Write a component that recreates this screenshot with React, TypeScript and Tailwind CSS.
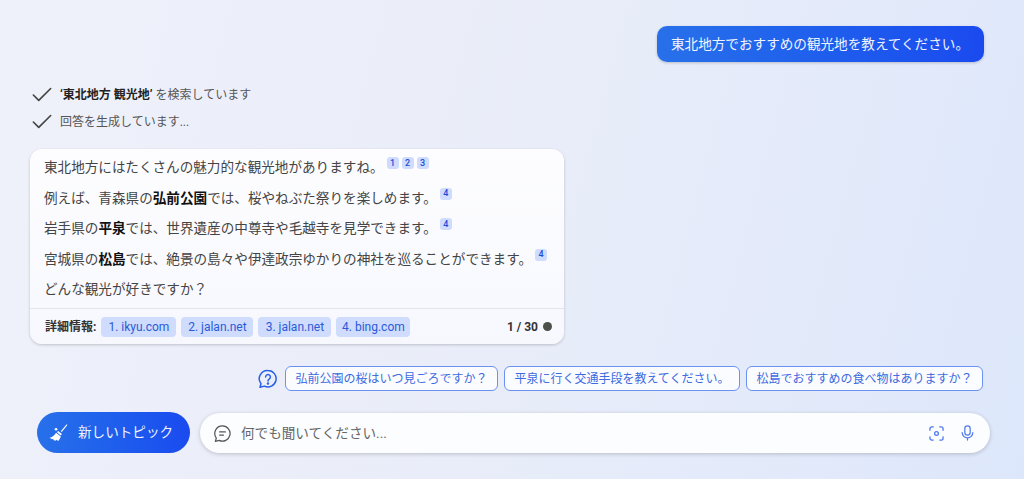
import { Check } from "lucide-react";

function Cite({ nums }: { nums: number[] }) {
  return (
    <span className="relative -top-[5px] ml-[3px] inline-flex gap-[3px] align-middle">
      {nums.map((n) => (
        <span
          key={n}
          className="flex h-[12px] w-[12px] items-center justify-center rounded-[3px] bg-[#cfdcfd] text-[9px] font-medium leading-none text-[#1d4ed8]"
        >
          {n}
        </span>
      ))}
    </span>
  );
}

function Step({ children }: { children: React.ReactNode }) {
  return (
    <div className="flex h-[27px] items-center">
      <Check className="-ml-[1px] h-[26px] w-[26px] text-[#444]" strokeWidth={1.5} />
      <span className="ml-[5px] text-[12px] text-[#555]">{children}</span>
    </div>
  );
}

const sources = [
  { label: "1. ikyu.com", width: "w-[75px]" },
  { label: "2. jalan.net", width: "w-[72px]" },
  { label: "3. jalan.net", width: "w-[73px]" },
  { label: "4. bing.com", width: "w-[74px]" },
];
const suggestions = [
  "弘前公園の桜はいつ見ごろですか？",
  "平泉に行く交通手段を教えてください。",
  "松島でおすすめの食べ物はありますか？",
];

export default function App() {
  return (
    <div className="flex h-[479px] w-[1024px] flex-col overflow-hidden bg-[linear-gradient(105deg,#eff1fa_0%,#e9edf9_50%,#dde7fb_100%)] pl-[30px] pr-[40px] pt-[26px] font-['Roboto','Noto_Sans_CJK_JP',sans-serif] text-[#333]">
      <div className="flex justify-end">
        <div className="flex h-[36px] w-[327px] items-center rounded-[10px] bg-gradient-to-r from-[#2870ea] to-[#1b4aef] pl-[14px] text-[13.6px] text-[#f0f4ff] shadow-[0_1px_3px_rgba(0,0,0,0.2)]">
          東北地方でおすすめの観光地を教えてください。
        </div>
      </div>

      <div className="mt-[19px] flex flex-col">
        <Step>
          <b className="font-bold text-[#222]">‘東北地方 観光地’</b> を検索しています
        </Step>
        <Step>回答を生成しています...</Step>
      </div>

      <div className="mt-[14px] w-[534px] rounded-[12px] bg-gradient-to-b from-[#fdfdff] to-[#f7f8fe] shadow-[0_1px_3px_rgba(0,0,0,0.2)]">
        <div className="flex flex-col gap-[10.5px] px-[14px] pt-[8px] pb-[9px] text-[13.6px] leading-[20px] text-[#444]">
          <p>
            東北地方にはたくさんの魅力的な観光地がありますね。
            <Cite nums={[1, 2, 3]} />
          </p>
          <p>
            例えば、青森県の<b className="text-[#111]">弘前公園</b>では、桜やねぶた祭りを楽しめます。
            <Cite nums={[4]} />
          </p>
          <p>
            岩手県の<b className="text-[#111]">平泉</b>では、世界遺産の中尊寺や毛越寺を見学できます。
            <Cite nums={[4]} />
          </p>
          <p>
            宮城県の<b className="text-[#111]">松島</b>では、絶景の島々や伊達政宗ゆかりの神社を巡ることができます。
            <Cite nums={[4]} />
          </p>
          <p>どんな観光が好きですか？</p>
        </div>
        <div className="flex h-[36px] items-center border-t border-[#e3e5ea] pl-[15px] pr-[12px]">
          <span className="mr-[5px] text-[12px] font-bold text-[#333]">詳細情報:</span>
          <div className="flex gap-[5px]">
            {sources.map((s) => (
              <span
                key={s.label}
                className={`flex h-[20px] items-center justify-center rounded-[4px] bg-[#cfdcfd] text-[12px] text-[#2a5bd7] ${s.width}`}
              >
                {s.label}
              </span>
            ))}
          </div>
          <span className="ml-auto text-[12px] font-bold text-[#333]">1 / 30</span>
          <span className="ml-[5px] h-[9px] w-[9px] rounded-full bg-[#4a4f4a]" />
        </div>
      </div>

      <div className="mr-[1px] mt-[22px] flex items-center justify-end gap-[6px]">
        <svg viewBox="0 0 20 20" className="mr-[1px] h-[20px] w-[20px] fill-none stroke-[#2a60e4]" strokeWidth="1.5">
          <path d="M10 1.5a8.2 8.2 0 1 1-3.6 15.6L2 18.3l1-3.6A8.2 8.2 0 0 1 10 1.5Z" strokeLinejoin="round" />
          <path d="M7.6 8a2.4 2.4 0 1 1 3.6 2.1c-.8.5-1.2 1-1.2 1.9" strokeLinecap="round" />
          <circle cx="10" cy="14.4" r=".5" fill="#2a60e4" />
        </svg>
        {suggestions.map((s) => (
          <button
            key={s}
            className="flex h-[25px] items-center rounded-[6px] border border-[#6a92f2] bg-[#fbfcff] px-[9.5px] text-[12px] text-[#3d6be0]"
          >
            {s}
          </button>
        ))}
      </div>

      <div className="-mr-[6px] mt-[21px] flex gap-[10px] pl-[7px]">
        <button className="flex h-[41px] w-[153px] items-center rounded-full bg-gradient-to-r from-[#2870ea] to-[#1b4aef] pl-[12px] text-[13.6px] text-[#f0f4ff]">
          <svg viewBox="0 0 20 20" className="mr-[10px] h-[19px] w-[19px] fill-white">
            <path d="M18.6 1.2 12.4 8.6l1 .9 6-7.3Z" />
            <path d="M9.6 8.4l4 3.2-1.2 1.5-4-3.3Z" />
            <path d="M7.4 10.2l5 4.1c-.6 2-1.6 3.4-2.6 4.6l-2.2-1.2-.5 1-2.6-.7.2-1.5-1.6.5L.6 15.6c2.8-.6 5.4-2.6 6.8-5.4Z" />
            <circle cx="7.4" cy="6.6" r="1.4" />
          </svg>
          新しいトピック
        </button>
        <div className="flex h-[40px] w-[790px] items-center self-end rounded-full bg-[#fcfdff] pl-[13px] pr-[15px] shadow-[0_1px_4px_rgba(0,0,0,0.2)]">
          <svg viewBox="0 0 20 20" className="h-[19px] w-[19px] fill-none stroke-[#555]" strokeWidth="1.3">
            <path d="M10 2a8 8 0 1 1-3.5 15.2L2.5 18.2l1-3.4A8 8 0 0 1 10 2Z" strokeLinejoin="round" />
            <path d="M7 8.3h6M7 11.7h4" strokeLinecap="round" />
          </svg>
          <span className="ml-[9px] text-[13.6px] text-[#666]">何でも聞いてください...</span>
          <svg viewBox="0 0 16 16" className="ml-auto h-[15px] w-[15px] fill-none stroke-[#4f7af0]" strokeWidth="1.4">
            <path d="M1 4.5V3a2 2 0 0 1 2-2h1.5M11.5 1H13a2 2 0 0 1 2 2v1.5M15 11.5V13a2 2 0 0 1-2 2h-1.5M4.5 15H3a2 2 0 0 1-2-2v-1.5" strokeLinecap="round" />
            <circle cx="8" cy="8" r="2" />
          </svg>
          <svg viewBox="0 0 16 18" className="ml-[16px] h-[16px] w-[15px] fill-none stroke-[#4f7af0]" strokeWidth="1.4">
            <rect x="5" y="1" width="6" height="10.5" rx="3" />
            <path d="M2 8.5a6 6 0 0 0 12 0M8 14.5V17" strokeLinecap="round" />
          </svg>
        </div>
      </div>
    </div>
  );
}
